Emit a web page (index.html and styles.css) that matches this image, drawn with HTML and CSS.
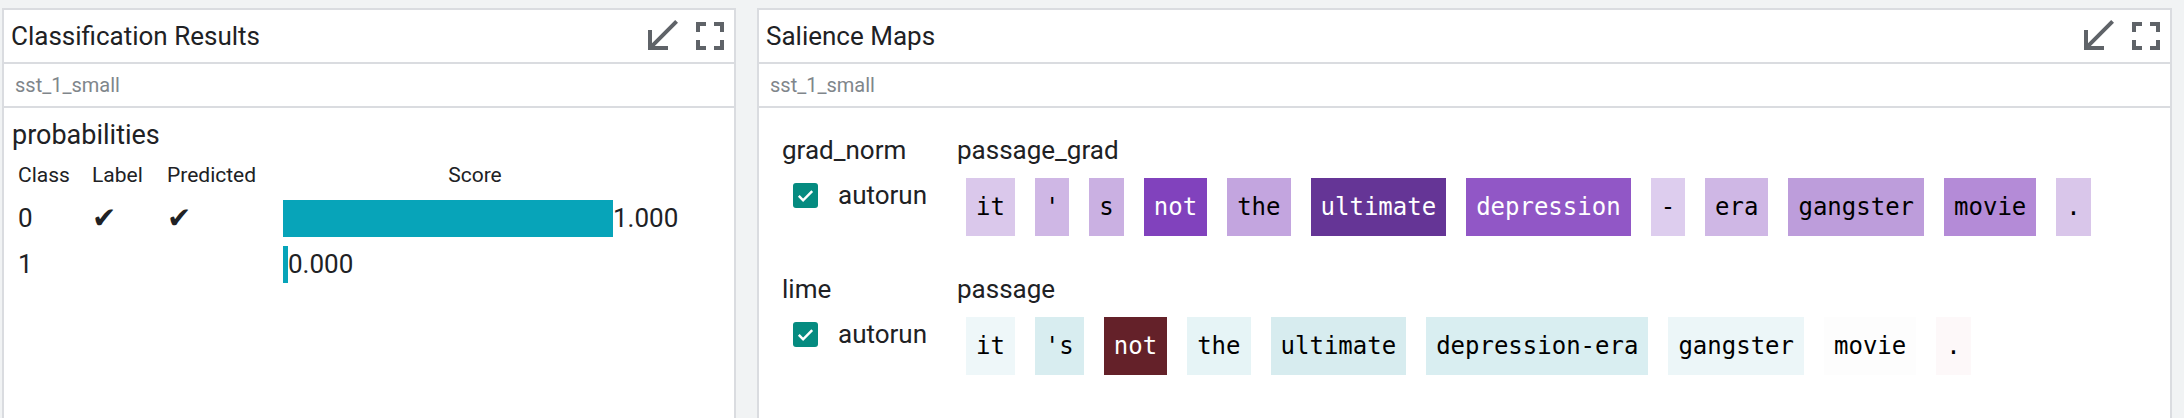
FILE: index.html
```html
<!DOCTYPE html>
<html>
<head>
<meta charset="utf-8">
<link rel="stylesheet" href="styles.css">
</head>
<body>
<div class="page">
  <section class="panel panel-left">
    <div class="panel-header">
      <span class="panel-title">Classification Results</span>
      <div class="panel-icons">
        <svg class="icon" viewBox="0 0 24 24"><path d="M15 19v-2H8.41L20 5.41 18.59 4 7 15.59V9H5v10h10z"/></svg>
        <svg class="icon" viewBox="0 0 24 24"><path d="M7 14H5v5h5v-2H7v-3zm-2-4h2V7h3V5H5v5zm12 7h-3v2h5v-5h-2v3zM14 5v2h3v3h2V5h-5z"/></svg>
      </div>
    </div>
    <div class="panel-sub">sst_1_small</div>
    <div class="panel-body body-left">
      <div class="section-title">probabilities</div>
      <div class="cls-table">
        <div class="th">Class</div>
        <div class="th">Label</div>
        <div class="th">Predicted</div>
        <div class="th th-score">Score</div>

        <div class="td">0</div>
        <div class="td check">✔</div>
        <div class="td check">✔</div>
        <div class="td score"><span class="bar" style="width:330px"></span><span class="val">1.000</span></div>

        <div class="td">1</div>
        <div class="td"></div>
        <div class="td"></div>
        <div class="td score"><span class="bar" style="width:5px"></span><span class="val">0.000</span></div>
      </div>
    </div>
  </section>

  <section class="panel panel-right">
    <div class="panel-header">
      <span class="panel-title">Salience Maps</span>
      <div class="panel-icons">
        <svg class="icon" viewBox="0 0 24 24"><path d="M15 19v-2H8.41L20 5.41 18.59 4 7 15.59V9H5v10h10z"/></svg>
        <svg class="icon" viewBox="0 0 24 24"><path d="M7 14H5v5h5v-2H7v-3zm-2-4h2V7h3V5H5v5zm12 7h-3v2h5v-5h-2v3zM14 5v2h3v3h2V5h-5z"/></svg>
      </div>
    </div>
    <div class="panel-sub">sst_1_small</div>
    <div class="panel-body body-right">
      <div class="sal-row">
        <div class="method">
          <div class="method-name">grad_norm</div>
          <div class="controls">
            <span class="checkbox"><svg viewBox="0 0 24 24"><path d="M5 12.5l4.5 4.5L19 7.5" fill="none" stroke="#fff" stroke-width="2.6"/></svg></span>
            <span class="ctl-label">autorun</span>
          </div>
        </div>
        <div class="field">
          <div class="field-name">passage_grad</div>
          <div class="tokens">
            <span class="tok" style="background:#dac8eb">it</span>
            <span class="tok" style="background:#cfb7e5">'</span>
            <span class="tok" style="background:#cab0e2">s</span>
            <span class="tok dark" style="background:#8142bd">not</span>
            <span class="tok" style="background:#c3a5df">the</span>
            <span class="tok dark" style="background:#653596">ultimate</span>
            <span class="tok dark" style="background:#9157c6">depression</span>
            <span class="tok" style="background:#ddcdee">-</span>
            <span class="tok" style="background:#cfb7e5">era</span>
            <span class="tok" style="background:#bd9ddb">gangster</span>
            <span class="tok" style="background:#b48bd7">movie</span>
            <span class="tok" style="background:#d9c6ea">.</span>
          </div>
        </div>
      </div>
      <div class="sal-row">
        <div class="method">
          <div class="method-name">lime</div>
          <div class="controls">
            <span class="checkbox"><svg viewBox="0 0 24 24"><path d="M5 12.5l4.5 4.5L19 7.5" fill="none" stroke="#fff" stroke-width="2.6"/></svg></span>
            <span class="ctl-label">autorun</span>
          </div>
        </div>
        <div class="field">
          <div class="field-name">passage</div>
          <div class="tokens">
            <span class="tok" style="background:#eef7f9">it</span>
            <span class="tok" style="background:#d8edf0">'s</span>
            <span class="tok dark" style="background:#642129">not</span>
            <span class="tok" style="background:#e6f4f6">the</span>
            <span class="tok" style="background:#d7ecef">ultimate</span>
            <span class="tok" style="background:#d9eef1">depression-era</span>
            <span class="tok" style="background:#ecf6f8">gangster</span>
            <span class="tok" style="background:#fdfdfd">movie</span>
            <span class="tok" style="background:#fdf8f9">.</span>
          </div>
        </div>
      </div>
    </div>
  </section>
</div>
</body>
</html>
```

FILE: styles.css
```css
* { box-sizing: border-box; }
html, body { margin: 0; padding: 0; }
body {
  width: 2184px;
  height: 418px;
  overflow: hidden;
  background: #f1f3f4;
  font-family: Roboto, "Noto Sans", sans-serif;
  color: #202124;
}
.page {
  display: flex;
  gap: 21px;
  padding: 8px 12px 0 2px;
}
.panel {
  background: #fff;
  border: 2px solid #dadce0;
  height: 440px;
  display: flex;
  flex-direction: column;
  flex: none;
}
.panel-left { width: 734px; }
.panel-right { width: 1415px; }

.panel-header {
  height: 54px;
  border-bottom: 2px solid #dadce0;
  display: flex;
  align-items: center;
  justify-content: space-between;
  padding-left: 7px;
}
.panel-title { font-size: 26px; line-height: 32px; color: #202124; }
.panel-icons { display: flex; }
.icon { width: 48px; height: 48px; fill: #5f6368; display: block; }

.panel-sub {
  height: 44px;
  border-bottom: 2px solid #dadce0;
  display: flex;
  align-items: center;
  padding-left: 11px;
  font-size: 20px;
  color: #80868b;
}

.body-left { padding: 12px 8px 0; }
.section-title { font-size: 27px; line-height: 30px; }

.cls-table {
  display: grid;
  grid-template-columns: 74px 75px 116px 384px;
  grid-template-rows: 32px 46px 46px;
  margin: 13px 0 0 6px;
  align-items: center;
}
.th { font-size: 21px; align-self: start; line-height: 25px; }
.th-score { text-align: center; }
.td { font-size: 26px; line-height: 30px; }
.check { font-family: "DejaVu Sans", sans-serif; font-size: 29px; }
.score { display: flex; align-items: center; }
.bar { display: block; height: 37px; background: #07a4b9; flex: none; }
.val { font-size: 26px; }

.body-right { padding: 27px 0 0 23px; }
.sal-row {
  display: grid;
  grid-template-columns: 175px auto;
  margin-bottom: 38px;
}
.method-name, .field-name { font-size: 26px; line-height: 30px; }
.controls {
  display: flex;
  align-items: center;
  height: 30px;
  margin: 15px 0 0 11px;
  gap: 20px;
}
.checkbox {
  width: 25px;
  height: 25px;
  background: #058b80;
  border-radius: 3px;
  display: flex;
  align-items: center;
  justify-content: center;
}
.checkbox svg { width: 23px; height: 23px; display: block; }
.ctl-label { font-size: 26px; line-height: 30px; }

.tokens {
  display: flex;
  gap: 20px;
  margin: 13px 0 0 9px;
}
.tok {
  font-family: "DejaVu Sans Mono", monospace;
  font-size: 24px;
  height: 58px;
  line-height: 58px;
  padding: 0 10px;
  color: #000;
  white-space: pre;
}
.tok.dark { color: #fff; }
```
